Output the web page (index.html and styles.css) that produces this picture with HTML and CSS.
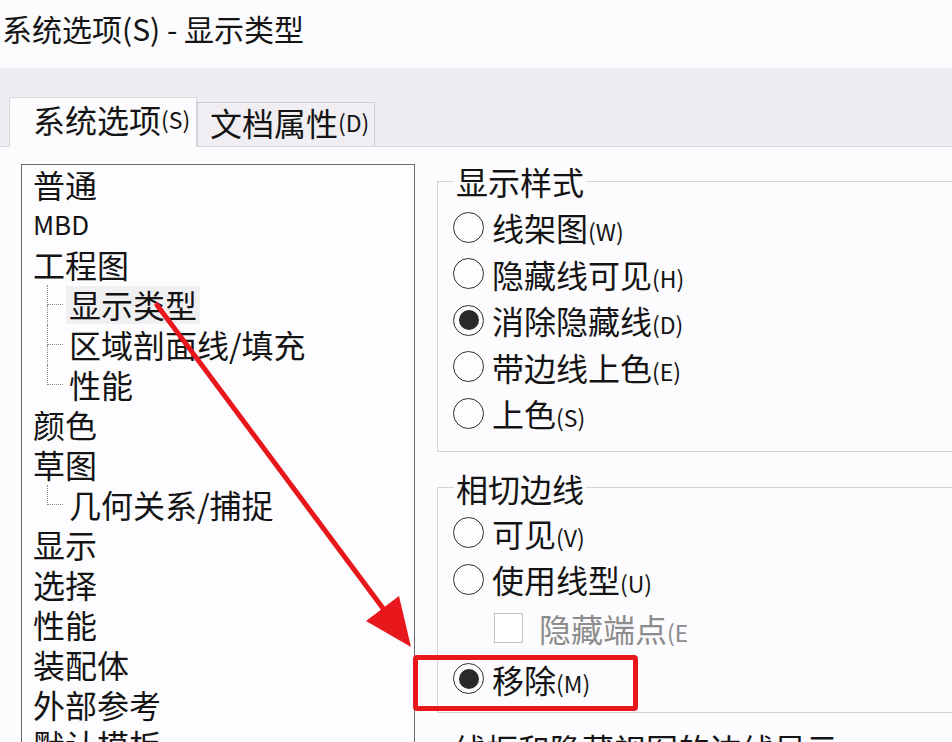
FILE: index.html
```html
<!DOCTYPE html>
<html lang="zh-CN">
<head>
<meta charset="utf-8">
<title>系统选项(S) - 显示类型</title>
<link rel="stylesheet" href="styles.css">
</head>
<body>
<div class="title">系统选项(S) - 显示类型</div>
<div class="tabbar">
  <div class="tab active">系统选项<span class="key">(S)</span></div>
  <div class="tab">文档属性<span class="key">(D)</span></div>
</div>
<div class="content">
  <div class="tree">
    <div class="node">普通</div>
    <div class="node latin">MBD</div>
    <div class="node">工程图</div>
    <div class="node child"><span class="conn"><span class="up"></span><span class="down"></span></span><span class="label selected">显示类型</span></div>
    <div class="node child"><span class="conn"><span class="up"></span><span class="down"></span></span><span class="label">区域剖面线/填充</span></div>
    <div class="node child last"><span class="conn"><span class="up"></span><span class="down"></span></span><span class="label">性能</span></div>
    <div class="node">颜色</div>
    <div class="node">草图</div>
    <div class="node child last short"><span class="conn"><span class="up"></span><span class="down"></span></span><span class="label">几何关系/捕捉</span></div>
    <div class="node">显示</div>
    <div class="node">选择</div>
    <div class="node">性能</div>
    <div class="node">装配体</div>
    <div class="node">外部参考</div>
    <div class="node">默认模板</div>
  </div>
  <div class="right">
    <fieldset class="group g1">
      <legend>显示样式</legend>
      <div class="opt"><span class="radio"></span><span>线架图<span class="key">(W)</span></span></div>
      <div class="opt"><span class="radio"></span><span>隐藏线可见<span class="key">(H)</span></span></div>
      <div class="opt"><span class="radio checked"></span><span>消除隐藏线<span class="key">(D)</span></span></div>
      <div class="opt"><span class="radio"></span><span>带边线上色<span class="key">(E)</span></span></div>
      <div class="opt"><span class="radio"></span><span>上色<span class="key">(S)</span></span></div>
    </fieldset>
    <fieldset class="group g2">
      <legend>相切边线</legend>
      <div class="opt r1"><span class="radio"></span><span>可见<span class="key">(V)</span></span></div>
      <div class="opt r2"><span class="radio"></span><span>使用线型<span class="key">(U)</span></span></div>
      <div class="opt r3 disabled"><span class="check"></span><span class="clip">隐藏端点<span class="key">(E</span></span></div>
      <div class="opt r4"><span class="radio checked"></span><span>移除<span class="key">(M)</span></span></div>
    </fieldset>
    <div class="next">线框和隐藏视图的边线显示</div>
  </div>
</div>
<div class="redbox"></div>
<svg class="arrow" width="952" height="742" viewBox="0 0 952 742">
  <line x1="157" y1="305" x2="385" y2="611" stroke="#e8171c" stroke-width="5" stroke-linecap="round"/>
  <polygon points="411,647 399,596 366,621" fill="#e8171c"/>
</svg>
</body>
</html>
```
FILE: styles.css
```css
* { box-sizing: border-box; }
html, body {
  margin: 0;
  padding: 0;
  width: 952px;
  height: 742px;
  overflow: hidden;
  background: #fcfbfd;
  color: #141414;
  font-family: "Noto Sans CJK SC", "Noto Sans", sans-serif;
}
.title {
  height: 68px;
  line-height: 57px;
  padding-left: 2px;
  font-size: 30px;
  white-space: nowrap;
}
.tabbar {
  height: 79px;
  background: #efedf1;
  border-bottom: 1px solid #d8d6da;
  display: flex;
  align-items: flex-end;
  padding-left: 9px;
}
.tab {
  font-size: 32px;
  white-space: nowrap;
  display: flex;
  align-items: center;
}
.tab.active {
  width: 188px;
  height: 50px;
  margin-bottom: -1px;
  background: #fcfbfd;
  border: 1px solid #d8d6da;
  border-bottom: none;
  border-radius: 2px 2px 0 0;
  padding-left: 23px;
  padding-bottom: 7px;
}
.tab:not(.active) {
  width: 178px;
  height: 44px;
  background: #f0eef2;
  border: 1px solid #cfcdd1;
  border-bottom: none;
  padding-left: 12px;
  padding-bottom: 5px;
}
.key {
  font-size: 23px;
}
.content {
  display: flex;
  padding-left: 21px;
  padding-top: 14px;
}
.tree {
  width: 394px;
  height: 640px;
  margin-top: 3px;
  border: 1px solid #6a6a6a;
  background: #fdfcfe;
  padding: 0 0 0 11px;
  flex-shrink: 0;
}
.node {
  height: 40px;
  line-height: 40px;
  font-size: 32px;
  white-space: nowrap;
  display: flex;
  align-items: center;
  padding-bottom: 2px;
}
.node.latin { font-size: 26px; }
.node.child { padding-bottom: 0; }
.conn {
  width: 16px;
  height: 40px;
  margin-left: 14px;
  margin-right: 3px;
  display: flex;
  flex-direction: column;
}
.conn .up {
  height: 20px;
  border-left: 1px dotted #8a8a8a;
  border-bottom: 1px dotted #8a8a8a;
}
.conn .down {
  flex: 1;
  border-left: 1px dotted #8a8a8a;
}
.node.last .conn .down { border-left: none; }
.label {
  padding: 0 3px 2px;
  height: 38px;
  line-height: 36px;
}
.label.selected { background: #f0eff2; }
.right {
  margin-left: 22px;
  width: 560px;
  flex-shrink: 0;
}
.group {
  margin: 0;
  border: 1px solid #d6d4d8;
  border-right: none;
  padding: 0 0 0 16px;
  min-width: 0;
}
.group legend {
  font-size: 32px;
  line-height: 40px;
  height: 40px;
  padding: 0 2px;
}
.g1 { padding-top: 3px; padding-bottom: 14px; }
.opt {
  height: 46.5px;
  display: flex;
  align-items: center;
  font-size: 32px;
  white-space: nowrap;
}
.radio {
  width: 31px;
  height: 31px;
  border: 1.5px solid #2e2e2e;
  border-radius: 50%;
  background: #fdfdfd;
  margin-left: -1px;
  margin-right: 8px;
  display: flex;
  align-items: center;
  justify-content: center;
  flex-shrink: 0;
}
.radio.checked::after {
  content: "";
  width: 20px;
  height: 20px;
  border-radius: 50%;
  background: #2a2a2a;
}
.g2 { margin-top: 16px; padding-top: 2px; padding-bottom: 7px; }
.g2 .r1 { height: 46px; }
.g2 .r2 { height: 47px; }
.g2 .r3 { height: 50px; padding-left: 40px; }
.g2 .r4 { height: 52px; }
.check {
  width: 29px;
  height: 30px;
  border: 1px solid #c2c2c2;
  background: #fff;
  margin-right: 16px;
  flex-shrink: 0;
}
.disabled { color: #8c8c8c; }
.clip {
  display: block;
  width: 148px;
  overflow: hidden;
}
.next {
  margin-top: 15px;
  padding-left: 17px;
  font-size: 32px;
  line-height: 40px;
  white-space: nowrap;
}
.redbox {
  position: absolute;
  left: 413px;
  top: 655px;
  width: 225px;
  height: 56px;
  border: 5px solid #e8171c;
  border-radius: 4px;
}
.arrow {
  position: absolute;
  left: 0;
  top: 0;
  pointer-events: none;
}
```
